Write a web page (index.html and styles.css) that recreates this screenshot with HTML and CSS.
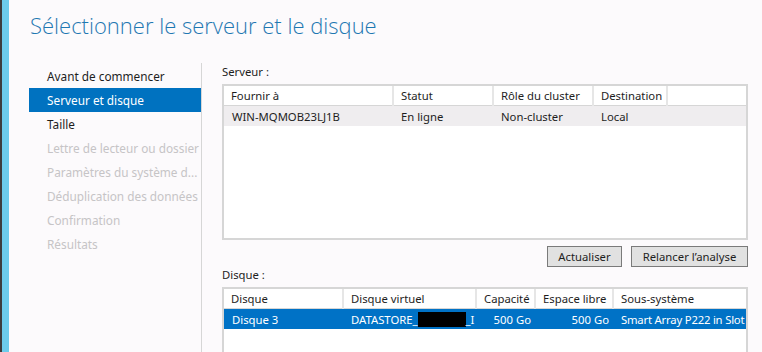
FILE: index.html
```html
<!DOCTYPE html>
<html lang="fr">
<head>
<meta charset="utf-8">
<title>Sélectionner le serveur et le disque</title>
<link rel="stylesheet" href="styles.css">
</head>
<body>
<div class="page">
  <div class="edge"></div>
  <div class="main">
    <h1 class="title">Sélectionner le serveur et le disque</h1>
    <div class="body">
      <nav class="steps">
        <div class="step">Avant de commencer</div>
        <div class="step active">Serveur et disque</div>
        <div class="step">Taille</div>
        <div class="step off">Lettre de lecteur ou dossier</div>
        <div class="step off">Paramètres du système d...</div>
        <div class="step off">Déduplication des données</div>
        <div class="step off">Confirmation</div>
        <div class="step off">Résultats</div>
      </nav>
      <div class="divider"></div>
      <section class="pane">
        <div class="label">Serveur :</div>
        <div class="grid server">
          <table>
            <colgroup><col class="c171"><col class="c100"><col class="c100"><col class="c74"><col></colgroup>
            <thead>
              <tr><th>Fournir à</th><th>Statut</th><th>Rôle du cluster</th><th>Destination</th><th class="last"></th></tr>
            </thead>
            <tbody>
              <tr class="hover"><td>WIN-MQMOB23LJ1B</td><td>En ligne</td><td>Non-cluster</td><td>Local</td><td></td></tr>
            </tbody>
          </table>
        </div>
        <div class="actions">
          <button class="btn b-refresh">Actualiser</button>
          <button class="btn b-rescan">Relancer l’analyse</button>
        </div>
        <div class="label disk-label">Disque :</div>
        <div class="grid disk">
          <table>
            <colgroup><col class="d121"><col class="d133"><col class="d59"><col class="d78"><col></colgroup>
            <thead>
              <tr><th>Disque</th><th>Disque virtuel</th><th>Capacité</th><th>Espace libre</th><th class="last">Sous-système</th></tr>
            </thead>
            <tbody>
              <tr class="selected"><td>Disque 3</td><td>DATASTORE_<span class="redact"></span>_I</td><td class="num">500 Go</td><td class="num">500 Go</td><td class="clip">Smart Array P222 in Slot 1</td></tr>
            </tbody>
          </table>
        </div>
      </section>
    </div>
  </div>
</div>
</body>
</html>
```

FILE: styles.css
```css
html, body {
  margin: 0;
  padding: 0;
  background: #fcfafc;
}
body {
  font-family: "Noto Sans", "Open Sans", sans-serif;
  font-size: 11.3px;
  color: #1e1e1e;
}
.page {
  display: flex;
  width: 762px;
  height: 352px;
  overflow: hidden;
}
.edge {
  width: 7px;
  flex: none;
  border-left: 2px solid #3c3c3c;
  background: #6ccbea;
}
.main {
  flex: 1;
  display: flex;
  flex-direction: column;
  padding-left: 20px;
  min-height: 0;
}
.title {
  flex: none;
  margin: 0;
  padding: 9px 0 0 1px;
  height: 55px;
  box-sizing: border-box;
  font-family: "Open Sans", "Noto Sans", sans-serif;
  font-weight: 300;
  font-size: 22px;
  line-height: 32px;
  color: #1f78b2;
  white-space: nowrap;
}
.body {
  display: flex;
  flex: 1;
  min-height: 0;
  padding-top: 8px;
  overflow: hidden;
}
.steps {
  width: 172px;
  flex: none;
  padding-top: 1px;
  font-size: 11.8px;
}
.step {
  height: 24px;
  line-height: 24px;
  padding-left: 18px;
  white-space: nowrap;
  overflow: hidden;
  color: #1e1e1e;
}
.step.active {
  background: #0072c0;
  color: #ffffff;
}
.step.off {
  color: #c6c4c6;
}
.divider {
  width: 1px;
  flex: none;
  background: #d6d6d6;
}
.pane {
  width: 526px;
  padding-left: 20px;
  flex: none;
}
.label {
  height: 18px;
  line-height: 18px;
  color: #1e1e1e;
}
.disk-label {
  height: 16px;
  line-height: 16px;
}
.grid {
  background: #ffffff;
  border: 2px solid #d6d6d6;
  box-sizing: border-box;
  overflow: hidden;
}
.server {
  margin-top: 3px;
  height: 156px;
}
.disk {
  margin-top: 4px;
  height: 80px;
  border-bottom: none;
}
table {
  border-collapse: collapse;
  table-layout: fixed;
  width: 100%;
}
.c171 { width: 169px; }
.c100 { width: 100px; }
.c74 { width: 74px; }
.d121 { width: 119px; }
.d133 { width: 133px; }
.d59 { width: 59px; }
.d78 { width: 78px; }
th {
  font-weight: normal;
  text-align: left;
  height: 19px;
  padding: 0 5px 0 7px;
  border-right: 2px solid #e6e6e6;
  border-bottom: 1px solid #d6d6d6;
  white-space: nowrap;
  overflow: hidden;
}
th.last { border-right: none; }
td {
  height: 20px;
  padding: 0 4px 0 8px;
  white-space: nowrap;
  overflow: hidden;
}
tr.hover td { background: #efedef; }
tr.selected td {
  background: #0072c6;
  color: #ffffff;
}
td.num { text-align: right; }
td.clip {
  text-overflow: clip;
  letter-spacing: -0.2px;
}
.redact {
  display: inline-block;
  width: 48px;
  height: 15px;
  background: #000000;
  vertical-align: -3px;
}
.actions {
  display: flex;
  justify-content: flex-end;
  gap: 9px;
  margin-top: 6px;
  height: 21px;
}
.btn {
  font-family: inherit;
  font-size: 11.3px;
  color: #1e1e1e;
  background: #e1e1e1;
  border: 1px solid #7a7a7a;
  padding: 0;
  height: 21px;
  line-height: 19px;
  margin: 0;
}
.b-refresh { width: 75px; }
.b-rescan { width: 117px; }
```
